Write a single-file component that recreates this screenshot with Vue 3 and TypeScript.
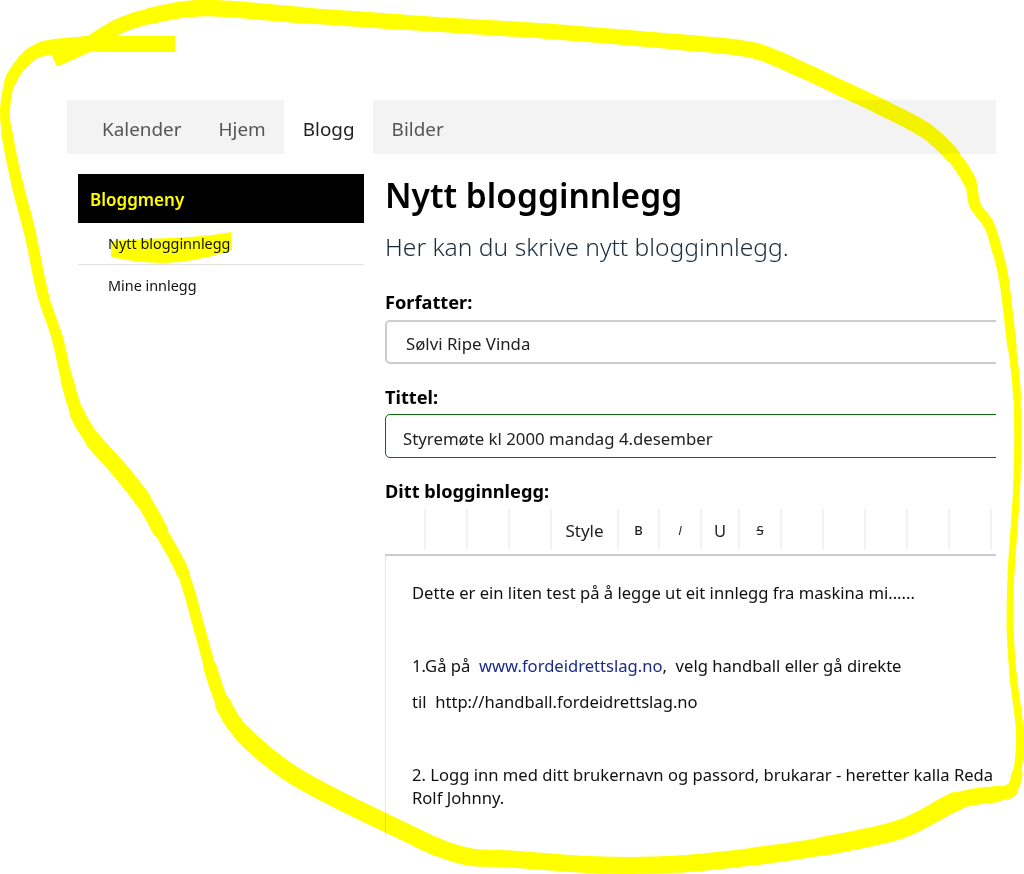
<script setup lang="ts">
interface ToolCell {
  label: string;
  cls: string;
}

const tabs = ['Kalender', 'Hjem', 'Blogg', 'Bilder'];

const tools: ToolCell[] = [
  { label: '', cls: 'first' },
  { label: '', cls: '' },
  { label: '', cls: '' },
  { label: '', cls: '' },
  { label: 'Style', cls: 'style' },
  { label: 'B', cls: 'b' },
  { label: 'I', cls: 'i' },
  { label: 'U', cls: 'u' },
  { label: 'S', cls: 's' },
  { label: '', cls: '' },
  { label: '', cls: '' },
  { label: '', cls: '' },
  { label: '', cls: '' },
  { label: '', cls: '' },
];

// the hand-drawn yellow ring: x, y, pen width
const ring: number[][] = [
  [175, 44, 16], [120, 44, 16], [85, 44, 16], [42, 49, 14], [23, 62, 13], [10, 82, 11], [5, 110, 9],
  [7, 133, 11], [17, 183, 12], [30, 233, 12], [43, 295, 11], [57, 337, 11], [67, 380, 12], [77, 413, 14],
  [93, 440, 16], [117, 467, 17], [143, 500, 17], [160, 530, 14], [183, 573, 12], [200, 631, 11],
  [210, 667, 12], [223, 704, 15], [243, 734, 18], [287, 771, 18], [337, 799, 18], [403, 831, 18],
  [437, 847, 18], [470, 857, 17], [510, 859, 17], [600, 865, 17], [680, 864, 17], [757, 856, 18],
  [824, 846, 18], [901, 829, 20], [957, 801, 18], [997, 794, 15], [1011, 790, 13], [1017, 774, 9],
  [1020, 734, 7], [1013, 674, 8], [1010, 624, 6], [1011, 574, 7], [1017, 480, 7], [1017, 397, 7],
  [1012, 347, 9], [1004, 280, 10], [997, 250, 10], [989, 225, 11], [975, 205, 11], [970, 182, 12],
  [952, 155, 15], [925, 130, 16], [879, 106, 16], [845, 90, 16], [800, 69, 16], [752, 50, 16],
  [679, 42, 16], [545, 31, 15], [512, 29, 15], [400, 22, 15], [300, 15, 16], [205, 8, 17], [150, 16, 16],
  [117, 27, 15], [85, 46, 15], [54, 60, 14],
];

// one curve per pair of points, so the pen width can vary along the ring
const ringParts = ring.slice(0, -1).map((p1, i) => {
  const p0 = ring[i - 1] || p1;
  const p2 = ring[i + 1];
  const p3 = ring[i + 2] || p2;
  const c1x = p1[0] + (p2[0] - p0[0]) / 6;
  const c1y = p1[1] + (p2[1] - p0[1]) / 6;
  const c2x = p2[0] - (p3[0] - p1[0]) / 6;
  const c2y = p2[1] - (p3[1] - p1[1]) / 6;
  return {
    d: `M${p1[0]} ${p1[1]} C${c1x} ${c1y} ${c2x} ${c2y} ${p2[0]} ${p2[1]}`,
    width: (p1[2] + p2[2]) / 2,
    cap: i === 0 || i === ring.length - 2 ? 'butt' : 'round',
  };
});
</script>

<template>
  <div class="page">
    <nav class="tabs">
      <a v-for="t in tabs" :key="t" class="tab" :class="{ active: t === 'Blogg' }">{{ t }}</a>
      <span class="tabs-fill"></span>
    </nav>

    <div class="content">
      <aside class="side">
        <div class="side-head">Bloggmeny</div>
        <a class="side-item first">Nytt blogginnlegg</a>
        <a class="side-item">Mine innlegg</a>
      </aside>

      <main class="main">
        <h1>Nytt blogginnlegg</h1>
        <p class="lead">Her kan du skrive nytt blogginnlegg.</p>

        <label class="lbl">Forfatter:</label>
        <div class="field author">Sølvi Ripe Vinda</div>

        <label class="lbl">Tittel:</label>
        <div class="field title">Styremøte kl 2000 mandag 4.desember</div>

        <label class="lbl">Ditt blogginnlegg:</label>
        <div class="toolbar">
          <span v-for="(c, i) in tools" :key="i" class="tool" :class="c.cls">{{ c.label }}</span>
        </div>
        <div class="editor">
          <p>Dette er ein liten test på å legge ut eit innlegg fra maskina mi......</p>
          <p>&nbsp;</p>
          <p>1.Gå på&nbsp; <a class="link">www.fordeidrettslag.no</a>,&nbsp; velg handball eller gå direkte</p>
          <p>til&nbsp; http://handball.fordeidrettslag.no</p>
          <p>&nbsp;</p>
          <p>2. Logg inn med ditt brukernavn og passord, brukarar - heretter kalla Reda<br />Rolf Johnny.</p>
        </div>
      </main>
    </div>

    <svg class="scribble" width="1024" height="874" viewBox="0 0 1024 874">
      <path
        d="M111 241 C140 239 170 238 190 237 C205 236 220 234 231 232 L232 250 C215 256 190 262 165 263 C145 263 125 260 111 257 Z"
        fill="#ffff00"
      />
      <path
        v-for="(s, i) in ringParts"
        :key="i"
        :d="s.d"
        :stroke-width="s.width"
        :stroke-linecap="s.cap"
        stroke="#ffff00"
        fill="none"
      />
    </svg>
  </div>
</template>

<style scoped>
.page {
  position: relative;
  width: 1024px;
  height: 874px;
  box-sizing: border-box;
  padding: 100px 28px 0 67px;
  overflow: hidden;
  background: #fff;
  color: #000;
  font-family: "Noto Sans", "Open Sans", sans-serif;
}
.tabs {
  display: flex;
  height: 54px;
  padding-left: 16.5px;
  background: #f3f3f3;
}
.tab {
  padding: 0 18.5px;
  line-height: 59px;
  font-size: 18.9px;
  color: #555;
}
.tab.active {
  color: #222;
  background: #fff;
}
.tabs-fill {
  flex: 1;
}
.content {
  display: flex;
  gap: 21px;
  height: 680px;
  padding: 20px 0 0 11px;
  overflow: hidden;
}
.side {
  flex: 0 0 286px;
  font-size: 14.4px;
}
.side-head {
  height: 49px;
  padding-left: 12px;
  line-height: 52px;
  background: #000;
  color: #ff0;
  font-size: 17px;
  font-weight: 600;
}
.side-item {
  display: block;
  height: 42px;
  padding-left: 30px;
  line-height: 42px;
  color: #111;
}
.side-item.first {
  height: 41px;
  border-bottom: 1px solid #e2e2e2;
}
.main {
  flex: 1;
  min-width: 0;
}
h1 {
  margin: 0;
  font-size: 33.5px;
  font-weight: 600;
  line-height: 42px;
}
.lead {
  margin: 12px 0 0;
  font-size: 24.6px;
  font-weight: 300;
  line-height: 38px;
  color: #1b2c3d;
}
.lbl {
  display: block;
  font-size: 18.2px;
  font-weight: 700;
  line-height: 24px;
}
.lead + .lbl {
  margin-top: 24px;
}
.field {
  box-sizing: border-box;
  width: 640px;
  height: 44px;
  margin-bottom: 21px;
  font-size: 16.8px;
  border-radius: 5px;
  color: #222;
  white-space: nowrap;
}
.author {
  margin-top: 6px;
  padding-left: 19px;
  border: 2px solid #ccc;
  line-height: 44px;
}
.title {
  margin-top: 5px;
  padding-left: 17px;
  border: 1px solid #0b6b0b;
  line-height: 47px;
}
.toolbar {
  display: flex;
  height: 45px;
  margin-top: 6px;
  border-bottom: 2px solid #ccc;
}
.tool {
  flex: 0 0 42px;
  box-sizing: border-box;
  height: 41px;
  border-right: 2px solid #f2f2f2;
  text-align: center;
  line-height: 43px;
  font-size: 13px;
  color: #222;
}
.tool.first {
  flex-basis: 41px;
}
.tool.style {
  flex-basis: 67px;
  font-size: 17px;
}
.tool.b {
  flex-basis: 41px;
  font-weight: 500;
}
.tool.i {
  font-style: italic;
  font-family: "Open Sans", sans-serif;
}
.tool.u {
  flex-basis: 38px;
  font-size: 16.5px;
}
.tool.s {
  text-decoration: line-through;
}
.editor {
  box-sizing: border-box;
  height: 280px;
  padding: 25px 0 0 26px;
  border-left: 1px solid #e6e6e6;
  font-size: 16.6px;
  color: #111;
  white-space: nowrap;
}
.editor p {
  margin: 0 0 13.4px;
  line-height: 23px;
}
.link {
  color: #1a2a8c;
}
.scribble {
  position: absolute;
  top: 0;
  left: 0;
  mix-blend-mode: multiply;
  pointer-events: none;
}
</style>
